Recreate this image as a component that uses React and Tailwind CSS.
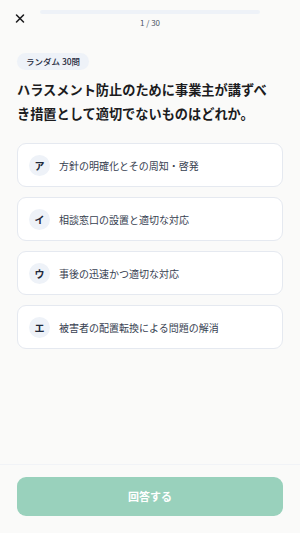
import { X } from 'lucide-react';

const options = [
  { key: 'ア', text: '方針の明確化とその周知・啓発' },
  { key: 'イ', text: '相談窓口の設置と適切な対応' },
  { key: 'ウ', text: '事後の迅速かつ適切な対応' },
  { key: 'エ', text: '被害者の配置転換による問題の解消' },
];

export default function App() {
  return (
    <div
      className="h-[533px] w-[300px] bg-[#fafaf9] flex flex-col text-[#1c1c1e]"
      style={{ fontFamily: '"Noto Sans CJK JP", "Noto Sans", sans-serif' }}
    >
      {/* Header */}
      <div className="flex items-start pl-[13px] pr-[40px] pt-[10px]">
        <button type="button" className="w-[14px] h-[14px] mt-[1px] flex items-center justify-center">
          <X className="w-[15px] h-[15px]" strokeWidth={2.6} />
        </button>
        <div className="flex-1 ml-[13px] flex flex-col items-center">
          <div className="w-full h-[4px] rounded-full bg-[#eef2f8]" />
          <span className="mt-[3px] text-[8px] leading-[12px] text-[#4b5563]">1 / 30</span>
        </div>
      </div>

      {/* Body */}
      <div className="flex-1 px-[17px] pt-[24px] flex flex-col">
        <div className="flex">
          <span className="rounded-full bg-[#eef2f8] px-[9px] py-[3px] text-[8.5px] leading-[11px] font-medium text-[#1e293b]">
            ランダム 30問
          </span>
        </div>
        <h1 className="mt-[8px] text-[13.2px] leading-[24px] font-bold">
          ハラスメント防止のために事業主が講ずべ
          <br />
          き措置として適切でないものはどれか。
        </h1>
        <div className="mt-[17px] flex flex-col gap-[10px]">
          {options.map((o) => (
            <button
              key={o.key}
              type="button"
              className="h-[44px] w-full flex items-center rounded-[9px] border border-[#e5e9f0] bg-white px-[11px] text-left"
            >
              <span className="w-[21px] h-[21px] rounded-full bg-[#eef2f8] flex items-center justify-center text-[10px] font-bold text-[#1e293b]">
                {o.key}
              </span>
              <span className="ml-[9px] text-[10px] text-[#374151]">{o.text}</span>
            </button>
          ))}
        </div>
      </div>

      {/* Footer */}
      <div className="border-t border-[#f1f3f7] px-[17px] pt-[12px] pb-[17px]">
        <button
          type="button"
          className="w-full h-[39px] rounded-[9px] bg-[#99d1bc] text-white text-[11px] font-bold"
        >
          回答する
        </button>
      </div>
    </div>
  );
}
